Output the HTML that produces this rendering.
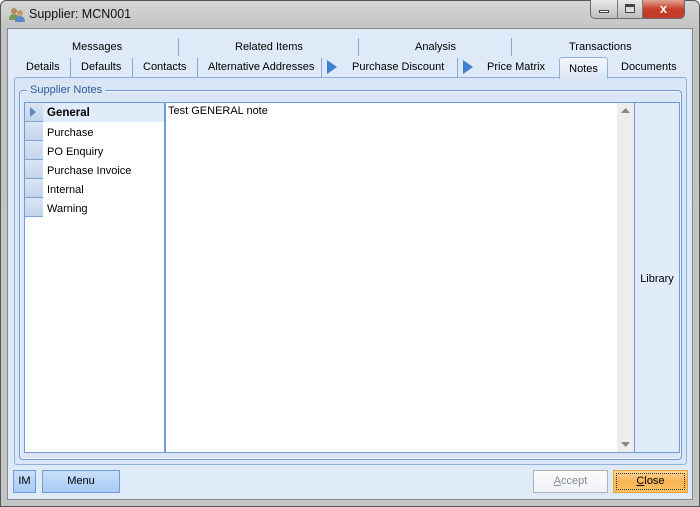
<!DOCTYPE html>
<html><head><meta charset="utf-8"><style>
*{box-sizing:border-box;margin:0;padding:0}
body{width:700px;height:507px;overflow:hidden;font-family:"Liberation Sans",sans-serif;font-size:11px;color:#000;background:#fff;position:relative}
.a{position:absolute}
.frame{left:0;top:0;width:700px;height:507px;border:1px solid #555;border-radius:6px 6px 0 0;background:linear-gradient(#d6d6d6,#c2c2c2 30px,#c4c4c4);}
.client{left:7px;top:28px;width:686px;height:472px;background:#dfeaf8;border:1px solid #8a8a8a}
.t{white-space:nowrap}
.sep{width:1px;background:#8aa7cf}
.btn{border:1px solid #6f9bd8;background:linear-gradient(#c9e0fb,#b7d4f7 50%,#a9cbf5);text-align:center;line-height:20px}
</style></head><body>
<div class="a frame"></div>
<svg class="a" style="left:8px;top:7px" width="18" height="16"><circle cx="6" cy="4" r="3" fill="#b08a5a"/><path d="M1 13c0-4 2-6 5-6s5 2 5 6z" fill="#7a9a5a"/><circle cx="12" cy="6" r="3" fill="#c89a6a"/><path d="M7 15c0-4 2-6 5-6s5 2 5 6z" fill="#5a8ac8"/></svg>
<div class="a t" style="left:29px;top:7px;font-size:12.5px;color:#111">Supplier: MCN001</div>
<div class="a" style="left:590px;top:0;width:95px;height:19px;border:1px solid #6a6a6a;border-top:none;border-radius:0 0 5px 5px;overflow:hidden;display:flex">
<div style="width:27px;background:linear-gradient(#e8e8e8,#bdbdbd);border-right:1px solid #777;position:relative"><div class="a" style="left:8px;top:10px;width:10px;height:3px;background:#fff;border:1px solid #444"></div></div>
<div style="width:25px;background:linear-gradient(#e8e8e8,#bdbdbd);border-right:1px solid #777;position:relative"><div class="a" style="left:7px;top:4px;width:10px;height:9px;border:1px solid #444;border-top-width:3px;background:#ddd"></div></div>
<div style="flex:1;background:linear-gradient(#e4a494,#c8402a 50%,#c0392b);color:#fff;font-weight:bold;text-align:center;font-size:13px;line-height:17px">x</div>
</div>
<div class="a client"></div>
<div class="a t" style="left:72px;top:41px">Messages</div>
<div class="a sep" style="left:178px;top:38px;height:18px"></div>
<div class="a t" style="left:235px;top:41px">Related Items</div>
<div class="a sep" style="left:358px;top:38px;height:18px"></div>
<div class="a t" style="left:415px;top:41px">Analysis</div>
<div class="a sep" style="left:511px;top:38px;height:18px"></div>
<div class="a t" style="left:569px;top:41px">Transactions</div>
<div class="a t" style="left:26px;top:61px">Details</div>
<div class="a sep" style="left:70px;top:58px;height:19px"></div>
<div class="a t" style="left:81px;top:61px">Defaults</div>
<div class="a sep" style="left:132px;top:58px;height:19px"></div>
<div class="a t" style="left:143px;top:61px">Contacts</div>
<div class="a sep" style="left:197px;top:58px;height:19px"></div>
<div class="a t" style="left:208px;top:61px">Alternative Addresses</div>
<div class="a sep" style="left:321px;top:58px;height:19px"></div>
<svg class="a" style="left:326px;top:60px" width="12" height="14"><path d="M1 0L11 7L1 14z" fill="#3f7fd0"/></svg>
<div class="a t" style="left:352px;top:61px">Purchase Discount</div>
<div class="a sep" style="left:457px;top:58px;height:19px"></div>
<svg class="a" style="left:462px;top:60px" width="12" height="14"><path d="M1 0L11 7L1 14z" fill="#3f7fd0"/></svg>
<div class="a t" style="left:487px;top:61px">Price Matrix</div>
<div class="a" style="left:14px;top:77px;width:673px;height:388px;border:1px solid #8fb1dd;border-radius:3px;background:#dae6f5"></div>
<div class="a" style="left:559px;top:57px;width:49px;height:22px;border:1px solid #8fb1dd;border-bottom:none;border-radius:3px 3px 0 0;background:linear-gradient(#f4f6fb,#dae6f5);text-align:center;line-height:22px">Notes</div>
<div class="a t" style="left:621px;top:61px">Documents</div>
<div class="a" style="left:19px;top:90px;width:663px;height:370px;border:1px solid #6f9bd8;border-radius:4px;box-shadow:inset 0 0 0 1px #eef4fc"></div>
<div class="a t" style="left:27px;top:84px;padding:0 3px;background:#dae6f5;color:#2e5b9a">Supplier Notes</div>
<div class="a" style="left:24px;top:102px;width:141px;height:351px;border:1px solid #6f9bd8;background:#fff"></div>
<div class="a" style="left:25px;top:103px;width:139px;height:19px;background:#e1ecfa"></div>
<div class="a" style="left:25px;top:103px;width:18px;height:114px;background:repeating-linear-gradient(#dbe6f4 0,#c3d4ea 18px,#7ea3d3 18px,#7ea3d3 19px)"></div>
<svg class="a" style="left:30px;top:107px" width="7" height="10"><path d="M0 0L6 5L0 10z" fill="#5a8ac8"/></svg>
<div class="a t" style="left:47px;top:107px;font-weight:bold;font-size:11.5px">General</div>
<div class="a t" style="left:47px;top:127px">Purchase</div>
<div class="a t" style="left:47px;top:146px">PO Enquiry</div>
<div class="a t" style="left:47px;top:165px">Purchase Invoice</div>
<div class="a t" style="left:47px;top:184px">Internal</div>
<div class="a t" style="left:47px;top:203px">Warning</div>
<div class="a" style="left:164px;top:102px;width:471px;height:351px;border:1px solid #6f9bd8;border-left:2px solid #6f9bd8;background:#fff"></div>
<div class="a t" style="left:168px;top:105px">Test GENERAL note</div>
<div class="a" style="left:617px;top:103px;width:17px;height:349px;background:#ededed"></div>
<svg class="a" style="left:621px;top:108px" width="9" height="6"><path d="M0 5L4.5 0L9 5z" fill="#888"/></svg>
<svg class="a" style="left:621px;top:442px" width="9" height="6"><path d="M0 0L4.5 5L9 0z" fill="#888"/></svg>
<div class="a" style="left:634px;top:102px;width:46px;height:351px;border:1px solid #6f9bd8;background:#e1ecfa;text-align:center;line-height:352px">Library</div>
<div class="a btn" style="left:13px;top:470px;width:23px;height:23px">IM</div>
<div class="a btn" style="left:42px;top:470px;width:78px;height:23px">Menu</div>
<div class="a" style="left:533px;top:470px;width:75px;height:23px;border:1px solid #b0b0b0;background:linear-gradient(#fbfbfb,#eef2f8);text-align:center;line-height:21px;color:#8a8a8a"><u>A</u>ccept</div>
<div class="a" style="left:613px;top:470px;width:75px;height:23px;border:1px solid #f0a030;background:linear-gradient(#fed79a,#fbb454 50%,#fcc46c);text-align:center;line-height:21px"><div style="position:absolute;left:2px;top:2px;right:2px;bottom:2px;border:1px dotted #333"></div><u>C</u>lose</div>
</body></html>
